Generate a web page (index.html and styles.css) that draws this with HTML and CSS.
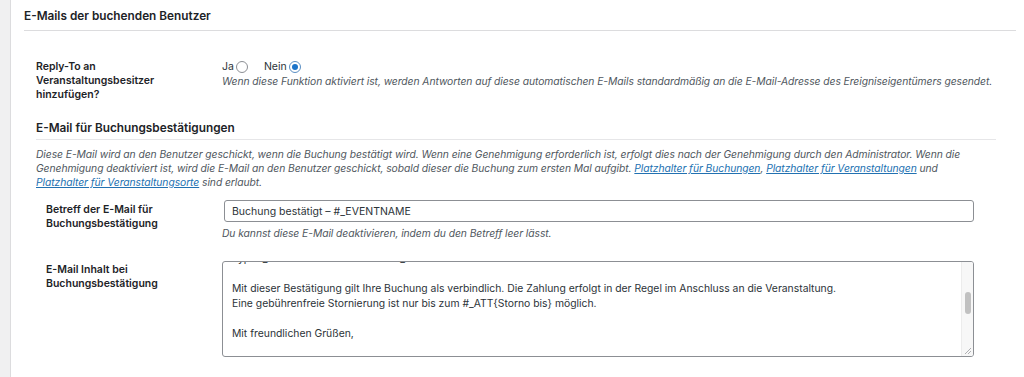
FILE: index.html
```html
<!DOCTYPE html>
<html lang="de">
<head>
    <meta charset="UTF-8">
    <title>E-Mails der buchenden Benutzer</title>
    <link rel="stylesheet" href="styles.css">
</head>
<body>
    <div class="wrap">
        <h2 class="section-title">E-Mails der buchenden Benutzer</h2>

        <div class="form-row top-row">
            <div class="form-label">Reply-To an Veranstaltungsbesitzer hinzufügen?</div>
            <div class="form-field">
                <div class="radio-group">
                    <label class="radio-label">Ja <input type="radio" name="reply-to" value="1"></label>
                    <label class="radio-label">Nein <input type="radio" name="reply-to" value="0" checked></label>
                </div>
                <div class="description">Wenn diese Funktion aktiviert ist, werden Antworten auf diese automatischen E-Mails standardmäßig an die E-Mail-Adresse des Ereigniseigentümers gesendet.</div>
            </div>
        </div>

        <div class="subsection">
            <h3 class="subsection-title">E-Mail für Buchungsbestätigungen</h3>
            <p class="description intro">Diese E-Mail wird an den Benutzer geschickt, wenn die Buchung bestätigt wird. Wenn eine Genehmigung erforderlich ist, erfolgt dies nach der Genehmigung durch den Administrator. Wenn die Genehmigung deaktiviert ist, wird die E-Mail an den Benutzer geschickt, sobald dieser die Buchung zum ersten Mal aufgibt. <a href="#">Platzhalter für Buchungen</a>, <a href="#">Platzhalter für Veranstaltungen</a> und <a href="#">Platzhalter für Veranstaltungsorte</a> sind erlaubt.</p>

            <div class="form-row sub-row">
                <div class="form-label">Betreff der E-Mail für Buchungsbestätigung</div>
                <div class="form-field">
                    <input class="text-input" type="text" value="Buchung bestätigt – #_EVENTNAME">
                    <div class="description">Du kannst diese E-Mail deaktivieren, indem du den Betreff leer lässt.</div>
                </div>
            </div>

            <div class="form-row sub-row body-row">
                <div class="form-label">E-Mail Inhalt bei Buchungsbestätigung</div>
                <div class="form-field">
                    <div class="textarea">
                        <div class="textarea-content">
                            <div class="cut-line">Typ: #_BOOKINGTICKETNAME – #_BOOKINGTICKETSPACES</div>
                            <div class="blank"></div>
                            <div>Mit dieser Bestätigung gilt Ihre Buchung als verbindlich. Die Zahlung erfolgt in der Regel im Anschluss an die Veranstaltung.</div>
                            <div>Eine gebührenfreie Stornierung ist nur bis zum #_ATT{Storno bis} möglich.</div>
                            <div class="blank"></div>
                            <div>Mit freundlichen Grüßen,</div>
                        </div>
                        <div class="scrollbar"><div class="scroll-thumb"></div></div>
                        <svg class="resize-grip" width="8" height="8" viewBox="0 0 8 8">
                            <path d="M7 1 L1 7 M7 4 L4 7" stroke="#9a9ca0" stroke-width="0.8"/>
                        </svg>
                    </div>
                </div>
            </div>
        </div>
    </div>
</body>
</html>
```

FILE: styles.css
```css
* {
    box-sizing: border-box;
    margin: 0;
    padding: 0;
}
body {
    background: #f0f0f1;
    font-family: Inter, "Noto Sans", sans-serif;
    font-size: 10.5px;
    line-height: 14px;
    color: #1d2327;
    height: 377px;
    overflow: hidden;
}
.wrap {
    margin-left: 10px;
    border-left: 1px solid #dcdcde;
    background: #fff;
    height: 100%;
    padding: 9px 8px 0 13px;
}
.section-title {
    font-size: 11.8px;
    font-weight: 600;
    line-height: 14px;
    color: #1d2327;
    padding-bottom: 7px;
    border-bottom: 1px solid #dcdcde;
}
.form-row {
    display: grid;
    grid-template-columns: 186px 1fr;
}
.top-row {
    margin-top: 29px;
    padding-left: 12px;
}
.form-label {
    font-weight: 600;
    padding-right: 20px;
}
.top-row .form-label {
    width: 150px;
}
.radio-group {
    display: flex;
    gap: 16px;
}
.radio-label {
    display: flex;
    align-items: center;
    gap: 2px;
    color: #2c3338;
}
input[type="radio"] {
    appearance: none;
    width: 12px;
    height: 12px;
    border: 1px solid #8c8f94;
    border-radius: 50%;
    background: #fff;
    display: inline-flex;
    align-items: center;
    justify-content: center;
}
input[type="radio"]:checked {
    border-color: #5a8fc4;
}
input[type="radio"]:checked::before {
    content: "";
    width: 6px;
    height: 6px;
    border-radius: 50%;
    background: #1a73c9;
}
.description {
    font-style: italic;
    font-size: 10.3px;
    letter-spacing: -0.06px;
    color: #50575e;
}
.subsection {
    padding: 0 12px 0 12px;
    margin-top: 19px;
}
.subsection-title {
    font-size: 11.8px;
    font-weight: 600;
    line-height: 14px;
    padding-bottom: 4px;
    border-bottom: 1px solid #e6e6e8;
    margin-right: 8px;
}
.intro {
    margin-top: 7px;
    margin-right: 16px;
}
.description a {
    color: #2271b1;
}
.sub-row {
    grid-template-columns: 176px 1fr;
    padding-left: 10px;
    margin-top: 14px;
}
.sub-row .form-field {
    padding-right: 30px;
}
.text-input {
    display: block;
    width: calc(100% - 2px);
    margin-left: 2px;
    height: 22px;
    border: 1px solid #8c8f94;
    border-radius: 3px;
    padding: 0 7px;
    font-family: inherit;
    font-size: 10.5px;
    color: #2c3338;
    margin-top: -3px;
    margin-bottom: 4px;
}
.body-row {
    margin-top: 21px;
}
.body-row .form-label {
    padding-top: 2px;
}
.textarea {
    position: relative;
    height: 96px;
    border: 1px solid #8c8f94;
    border-radius: 3px;
    overflow: hidden;
    color: #2c3338;
    font-size: 10.36px;
}
.textarea-content {
    margin-top: -11px;
    padding: 0 20px 0 9px;
    line-height: 15px;
}
.blank {
    height: 15px;
}
.scrollbar {
    position: absolute;
    top: 0;
    right: 0;
    width: 12px;
    height: 100%;
    background: #f7f7f7;
    border-left: 1px solid #ececec;
}
.scroll-thumb {
    width: 6px;
    height: 22px;
    margin: 30px 0 0 3px;
    border-radius: 3px;
    background: #c1c1c1;
}
.resize-grip {
    position: absolute;
    right: 1px;
    bottom: 1px;
}
```
